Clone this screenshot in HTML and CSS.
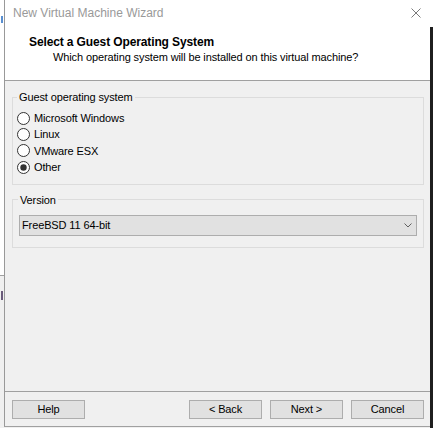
FILE: index.html
```html
<!DOCTYPE html>
<html lang="en">
<head>
<meta charset="utf-8">
<title>New Virtual Machine Wizard</title>
<link rel="stylesheet" href="styles.css">
</head>
<body>
<div class="desk">
  <div class="side-left">
    <div class="side-left-top"><span class="mark mark-blue"></span></div>
    <div class="side-left-bottom"><span class="mark mark-dark"></span></div>
  </div>
  <div class="window">
    <div class="titlebar">
      <span class="title">New Virtual Machine Wizard</span>
      <svg class="close" viewBox="0 0 10 10" aria-hidden="true">
        <path d="M0.5 0.5 L9.5 9.5 M9.5 0.5 L0.5 9.5" stroke="#7a7a7a" stroke-width="1" fill="none"/>
      </svg>
    </div>
    <div class="header">
      <div class="h-title">Select a Guest Operating System</div>
      <div class="h-sub">Which operating system will be installed on this virtual machine?</div>
    </div>
    <div class="content">
      <fieldset class="group group-os">
        <legend>Guest operating system</legend>
        <div class="radio">
          <svg viewBox="0 0 13 13"><circle cx="6.5" cy="6.5" r="6" fill="#fff" stroke="#333" stroke-width="1"/></svg>
          <span>Microsoft Windows</span>
        </div>
        <div class="radio">
          <svg viewBox="0 0 13 13"><circle cx="6.5" cy="6.5" r="6" fill="#fff" stroke="#333" stroke-width="1"/></svg>
          <span>Linux</span>
        </div>
        <div class="radio">
          <svg viewBox="0 0 13 13"><circle cx="6.5" cy="6.5" r="6" fill="#fff" stroke="#333" stroke-width="1"/></svg>
          <span>VMware ESX</span>
        </div>
        <div class="radio">
          <svg viewBox="0 0 13 13"><circle cx="6.5" cy="6.5" r="6" fill="#fff" stroke="#333" stroke-width="1"/><circle cx="6.5" cy="6.5" r="3.2" fill="#333"/></svg>
          <span>Other</span>
        </div>
      </fieldset>
      <fieldset class="group group-version">
        <legend>Version</legend>
        <div class="combo">
          <span>FreeBSD 11 64-bit</span>
          <svg class="chev" viewBox="0 0 8 5" aria-hidden="true"><path d="M0.5 0.5 L4 4 L7.5 0.5" stroke="#606060" stroke-width="1" fill="none"/></svg>
        </div>
      </fieldset>
    </div>
    <div class="footer">
      <button class="btn">Help</button>
      <button class="btn btn-push">&lt; Back</button>
      <button class="btn">Next &gt;</button>
      <button class="btn">Cancel</button>
    </div>
  </div>
  <div class="side-right">
    <div class="side-right-top"></div>
    <div class="side-right-bottom"></div>
  </div>
</div>
</body>
</html>
```
FILE: styles.css
```css
* { box-sizing: border-box; }
html, body { margin: 0; padding: 0; }
body {
  width: 433px;
  height: 428px;
  overflow: hidden;
  background: #f0f0f0;
  font-family: "Liberation Sans", Arial, sans-serif;
  font-size: 11px;
  letter-spacing: -0.12px;
  color: #000;
}
.desk {
  display: flex;
  align-items: flex-start;
  height: 428px;
}
.side-left {
  width: 4px;
  height: 428px;
  overflow: hidden;
  display: flex;
  flex-direction: column;
}
.side-left-top {
  height: 276px;
  background: #fff;
  border-bottom: 1px solid #a0a0a0;
  padding-top: 16px;
}
.side-left-bottom {
  flex: 1;
  background: #f0f0f0;
  padding-top: 15px;
}
.mark {
  display: block;
  width: 2px;
}
.mark-blue { height: 7px; margin-left: 1px; background: #5a8fd0; }
.mark-dark { height: 9px; margin-left: 1px; background: #6a5a7a; }
.window {
  width: 426px;
  height: 427px;
  flex: none;
  background: #fff;
  border-left: 1px solid #999;
  border-bottom: 1px solid #a0a0a0;
  display: flex;
  flex-direction: column;
}
.titlebar {
  height: 27px;
  flex: none;
  display: flex;
  justify-content: space-between;
  align-items: flex-start;
  padding: 5px 9px 0 8px;
}
.title {
  font-size: 12px;
  line-height: 16px;
  letter-spacing: 0;
  color: #999;
}
.close {
  width: 10px;
  height: 10px;
  margin-top: 3px;
}
.header {
  height: 54px;
  flex: none;
  padding: 8px 0 0 24px;
  border-bottom: 1px solid #a0a0a0;
}
.h-title {
  font-weight: bold;
  font-size: 12px;
  line-height: 14px;
}
.h-sub {
  margin: 1px 0 0 24px;
  line-height: 14px;
}
.content {
  flex: 1;
  background: #f0f0f0;
  padding: 9px 6px 0 7px;
}
.group {
  margin: 0;
  min-width: 0;
  border: 1px solid #dcdcdc;
}
.group legend {
  padding: 0 2px;
  line-height: 14px;
}
.group-os {
  padding: 6px 0 8px 4px;
}
.group-version {
  margin-top: 8px;
  padding: 8px 6px 11px 6px;
}
.group-version legend { margin-left: -1px; }
.radio {
  display: flex;
  align-items: center;
  gap: 4px;
  height: 16.4px;
  line-height: 16.4px;
}
.radio svg {
  width: 13px;
  height: 13px;
  flex: none;
}
.combo {
  height: 21px;
  border: 1px solid #adadad;
  background: #e1e1e1;
  display: flex;
  align-items: center;
  justify-content: space-between;
  padding: 0 4px 0 2px;
  line-height: 19px;
}
.chev {
  width: 8px;
  height: 5px;
}
.footer {
  height: 35px;
  flex: none;
  background: #f0f0f0;
  border-top: 1px solid #a0a0a0;
  padding: 8px 6px 0 7px;
  display: flex;
  align-items: flex-start;
  gap: 8px;
}
.btn {
  width: 73px;
  height: 19px;
  margin: 0;
  padding: 0;
  border: 1px solid #adadad;
  border-radius: 0;
  background: #e1e1e1;
  color: #000;
  font: inherit;
  letter-spacing: inherit;
  line-height: 17px;
  text-align: center;
}
.btn-push { margin-left: auto; }
.side-right {
  width: 3px;
  height: 428px;
  display: flex;
  flex-direction: column;
}
.side-right-top { height: 27px; background: #fff; }
.side-right-bottom { flex: 1; background: #1f1f1f; }
```
